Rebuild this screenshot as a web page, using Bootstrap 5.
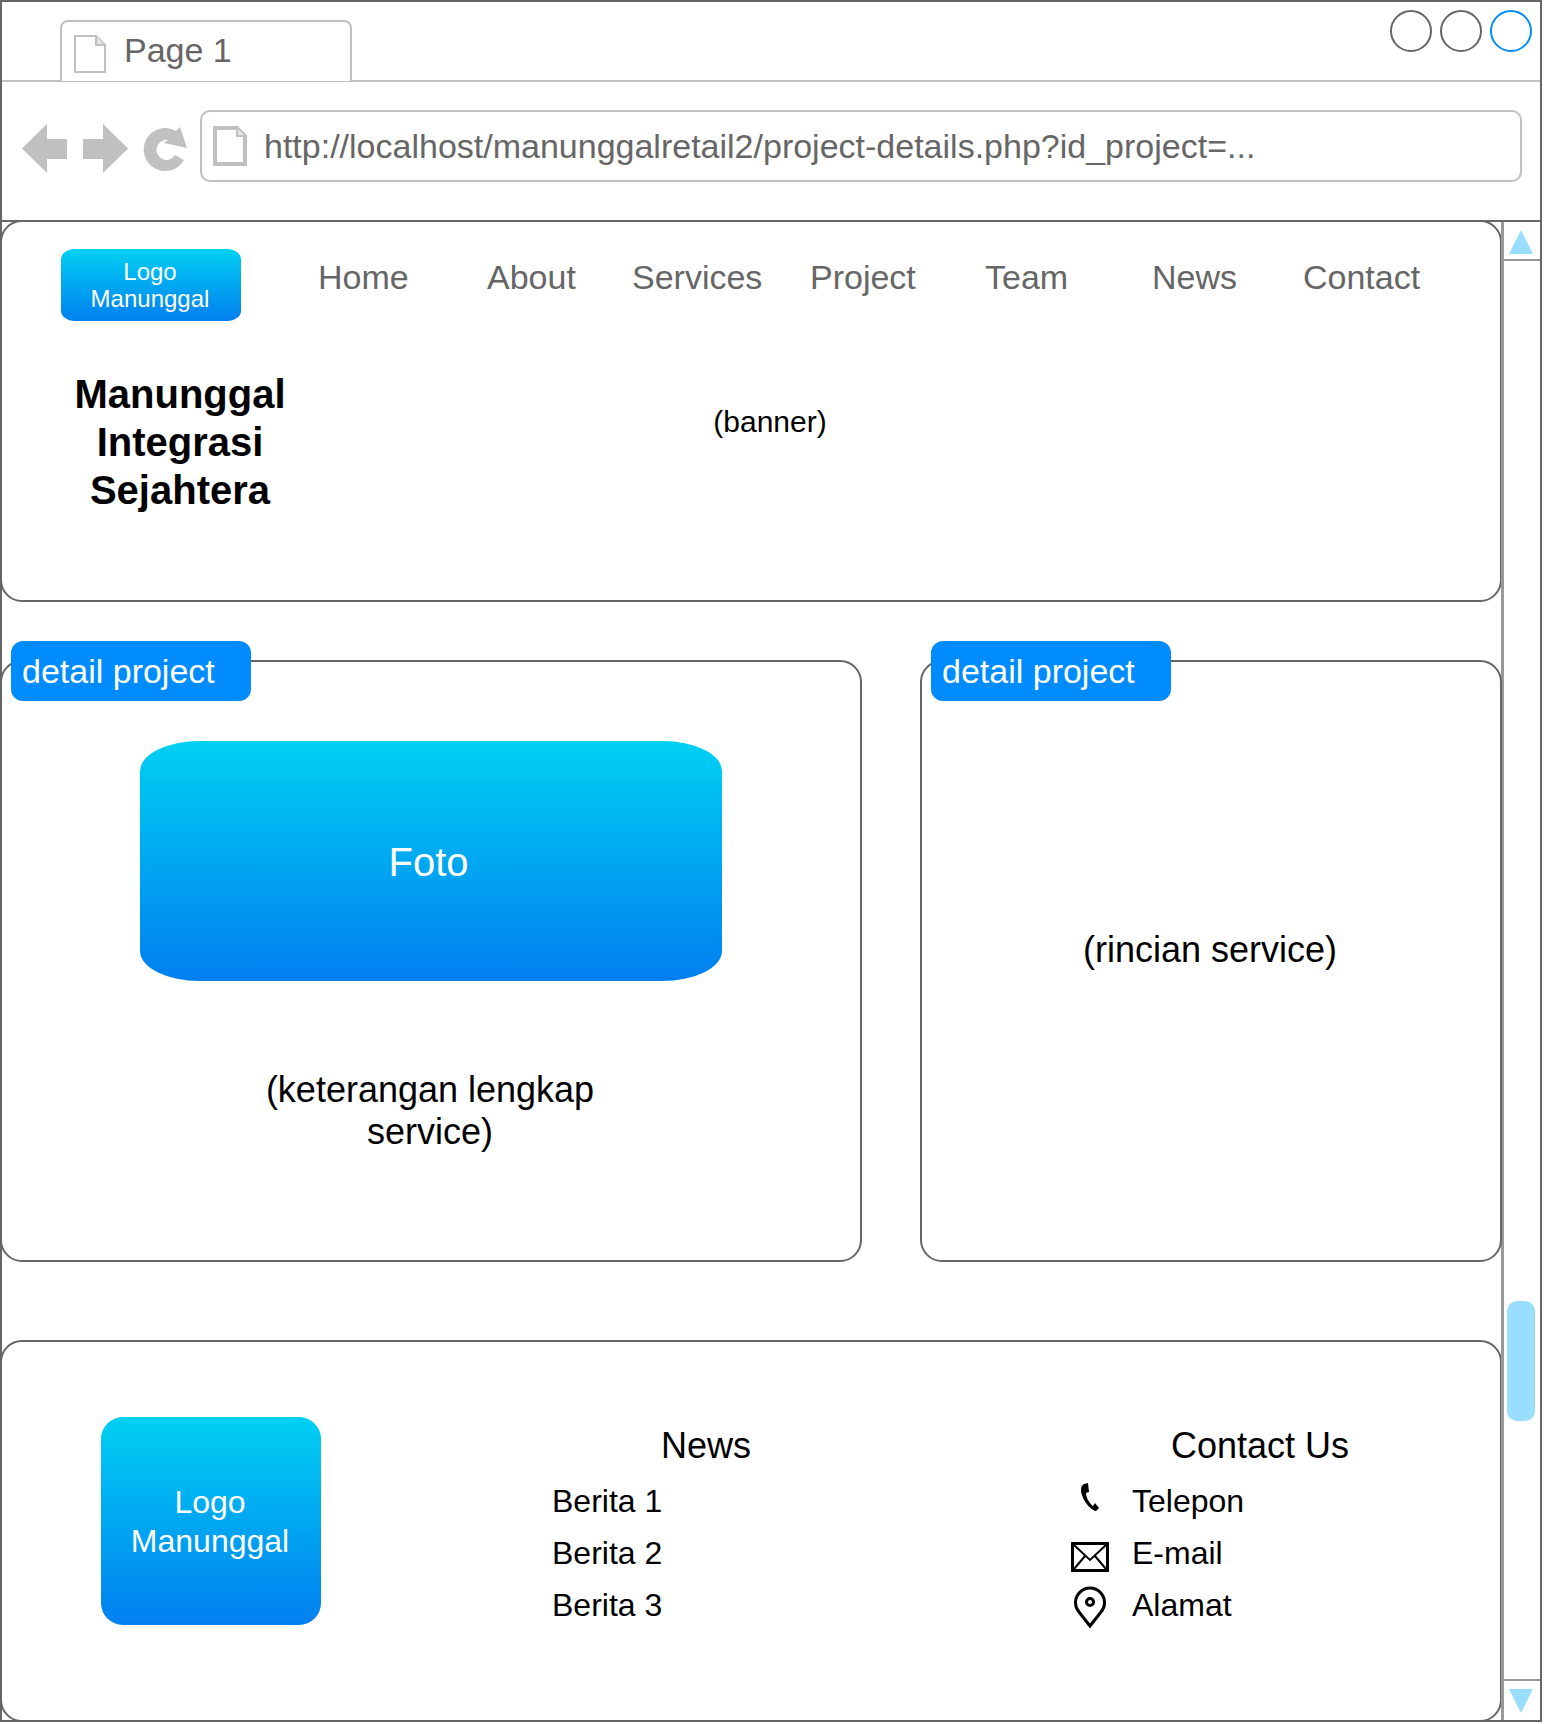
<!DOCTYPE html>
<html lang="en">

<head>
    <meta charset="UTF-8">
    <meta name="viewport" content="width=device-width, initial-scale=1.0">
    <title>Project details mockup</title>
    <link href="https://cdn.jsdelivr.net/npm/bootstrap@5.3.0/dist/css/bootstrap.min.css" rel="stylesheet">
    <style>
        body { margin: 0; background: #fff; font-family: "Liberation Sans", Arial, sans-serif; color: #000; }
        .win { width: 1542px; height: 1722px; border: 2px solid #666; }

        /* tab strip */
        .tabstrip { height: 80px; border-bottom: 2px solid #c0c0c0; padding-left: 58px; }
        .pagetab { width: 292px; height: 61px; margin-top: 18px; margin-bottom: -2px; background: #fff; border: 2px solid #c0c0c0; border-bottom: 0; border-radius: 8px 8px 0 0; color: #666; font-size: 34px; padding-left: 12px; gap: 18px; }
        .pagetab span { padding-bottom: 2px; }
        .winbtn { width: 42px; height: 42px; border: 2px solid #666; border-radius: 50%; }
        .winbtn-on { border-color: #008cff; }
        .winbtns { gap: 8px; padding: 8px 8px 0 0; margin-left: auto; }

        /* toolbar */
        .toolbar { height: 139px; padding: 28px 18px 0 20px; }
        .navicons { margin-top: 1px; }
        .urlbox { height: 72px; flex: 1; margin-left: 11px; border: 2px solid #c0c0c0; border-radius: 10px; color: #666; font-size: 34px; padding-left: 11px; gap: 17px; white-space: nowrap; }

        .viewport { height: 1500px; border-top: 2px solid #666; margin-top: -1px; }
        .pagecol { width: 1500px; }

        /* scrollbar */
        .sbar { width: 39px; border-left: 3px solid #999; margin-left: -1px; }
        .sbtn { height: 39px; padding-right: 2px; }
        .sbtn-up { border-bottom: 2px solid #999; padding-top: 2px; }
        .sbtn-down { border-top: 2px solid #999; height: 41px; }
        .sthumb { width: 28px; height: 120px; margin: 0 auto 258px 3px; background: #99ddff; border-radius: 10px; }

        /* panels */
        .panel { border: 2px solid #666; border-radius: 22px; background: #fff; margin-left: -2px; }
        .head-panel { height: 382px; margin-top: -2px; }
        .navrow { padding: 27px 0 0 59px; height: 104px; }
        .logo-sm { width: 180px; height: 72px; background: linear-gradient(#00d0f2, #007ff0); color: #fff; font-size: 24px; line-height: 27px; border-radius: 14px / 10px; padding-right: 2px; }
        .navlinks { margin-left: 77px; margin-top: -8px; display: grid; grid-template-columns: 169px 145px 178px 175px 167px 151px auto; }
        .navitem { height: 72px; color: #666; font-size: 34px; }
        .hero { padding-left: 28px; }
        .brandname { width: 300px; font-size: 40px; font-weight: 700; line-height: 48px; padding-top: 44px; }
        .bannertxt { width: 880px; font-size: 30px; padding-top: 73px; }

        .detail-wrap { gap: 60px; margin-top: 58px; }
        .detail-card { height: 602px; position: relative; font-size: 36px; line-height: 42px; }
        .detail-left { width: 862px; padding: 79px 0 0 138px; }
        .detail-right { width: 582px; padding: 0 2px 22px 0; }
        .tagbadge { position: absolute; left: 9px; top: -21px; width: 240px; height: 60px; background: #008cff; color: #fff; border-radius: 12px; font-size: 34px; padding-left: 11px; }
        .foto { width: 582px; height: 240px; background: linear-gradient(#00d0f2, #007ff0); color: #fff; font-size: 40px; border-radius: 60px / 30px; margin-bottom: 88px; padding: 1px 5px 0 0; }
        .ket { width: 580px; }

        .foot-panel { height: 382px; margin-top: 78px; padding: 75px 0 0 99px; }
        .logo-lg { width: 220px; height: 208px; background: linear-gradient(#00d0f2, #007ff0); color: #fff; font-size: 32px; line-height: 39px; border-radius: 22px; padding: 2px 2px 0 0; }
        .foot-news { width: 300px; margin-left: 231px; }
        .foot-contact { margin-left: 194px; width: 428px; }
        .foot-h { font-size: 36px; line-height: 42px; margin-top: 8px; margin-bottom: 8px; }
        .foot-h-news { padding-left: 8px; }
        .foot-row { height: 52px; font-size: 32px; }
        .foot-ico { width: 86px; padding-left: 2px; }
    </style>
</head>

<body>
    <div class="win d-flex flex-column">
        <!-- Tab strip -->
        <div class="tabstrip d-flex">
            <div class="pagetab d-flex align-items-center">
                <svg class="mt-1" width="32" height="38" viewBox="0 0 32 38" fill="none" stroke="#c0c0c0" stroke-width="2">
                    <path d="M1 1H22L31 10V37H1Z" />
                    <path d="M22 1V10H31" fill="#e4e4e4" />
                </svg>
                <span>Page 1</span>
            </div>
            <div class="winbtns d-flex">
                <div class="winbtn"></div>
                <div class="winbtn"></div>
                <div class="winbtn winbtn-on"></div>
            </div>
        </div>

        <!-- Toolbar -->
        <div class="toolbar d-flex">
            <svg class="navicons flex-shrink-0" width="167" height="71" viewBox="0 0 167 71" fill="#c0c0c0">
                <path d="M0 37.500L25 13V28H45V48H25V62Z" />
                <path d="M61 28H81V13L106 37.500L81 62V48H61Z" />
                <path d="M154 20A21.500 21.500 0 1 0 162 49L153 44A10 10 0 1 1 146 29L142 32L165 37L158 16Z" />
            </svg>
            <div class="urlbox d-flex align-items-center">
                <svg width="34" height="40" viewBox="0 0 34 40" fill="none" stroke="#c0c0c0" stroke-width="4">
                    <path d="M2 2H24L32 10V38H2Z" />
                    <path d="M24 2V10H32" stroke-width="2" fill="#e4e4e4" />
                </svg>
                <span>http://localhost/manunggalretail2/project-details.php?id_project=...</span>
            </div>
        </div>

        <!-- Viewport -->
        <div class="viewport d-flex">
            <div class="pagecol">
                <div class="panel head-panel">
                    <div class="navrow d-flex">
                        <div class="logo-sm d-flex align-items-center justify-content-center text-center">Logo<br>Manunggal</div>
                        <div class="navlinks">
                            <div class="navitem d-flex align-items-center">Home</div>
                            <div class="navitem d-flex align-items-center">About</div>
                            <div class="navitem d-flex align-items-center">Services</div>
                            <div class="navitem d-flex align-items-center">Project</div>
                            <div class="navitem d-flex align-items-center">Team</div>
                            <div class="navitem d-flex align-items-center">News</div>
                            <div class="navitem d-flex align-items-center">Contact</div>
                        </div>
                    </div>
                    <div class="hero d-flex">
                        <div class="brandname text-center">Manunggal<br>Integrasi<br>Sejahtera</div>
                        <div class="bannertxt text-center">(banner)</div>
                    </div>
                </div>

                <div class="detail-wrap d-flex">
                    <div class="panel detail-card detail-left">
                        <div class="tagbadge d-flex align-items-center">detail project</div>
                        <div class="foto d-flex align-items-center justify-content-center">Foto</div>
                        <div class="ket text-center">(keterangan lengkap<br>service)</div>
                    </div>
                    <div class="panel detail-card detail-right d-flex align-items-center justify-content-center">
                        <div class="tagbadge d-flex align-items-center">detail project</div>
                        <div>(rincian service)</div>
                    </div>
                </div>

                <div class="panel foot-panel d-flex">
                    <div class="logo-lg d-flex align-items-center justify-content-center text-center">Logo<br>Manunggal</div>
                    <div class="foot-news">
                        <div class="foot-h foot-h-news text-center">News</div>
                        <div class="foot-row d-flex align-items-center">Berita 1</div>
                        <div class="foot-row d-flex align-items-center">Berita 2</div>
                        <div class="foot-row d-flex align-items-center">Berita 3</div>
                    </div>
                    <div class="foot-contact">
                        <div class="foot-h text-center">Contact Us</div>
                        <div class="foot-row d-flex align-items-center">
                            <div class="foot-ico d-flex justify-content-center">
                                <svg class="mb-2" width="18" height="28" viewBox="0 0 18 28" fill="#000">
                                    <path d="M3 1L7 0L8 9L5 10C5 14 8 20 12 23L14 20L18 25L15 28C8 27 0 14 0 7C0 4 1 2 3 1Z" />
                                </svg>
                            </div>
                            <span>Telepon</span>
                        </div>
                        <div class="foot-row d-flex align-items-center">
                            <div class="foot-ico d-flex justify-content-center">
                                <svg class="mt-2" width="38" height="30" viewBox="0 0 38 30" fill="none" stroke="#000">
                                    <rect x="1.500" y="1.500" width="35" height="27" stroke-width="3" />
                                    <path d="M3 3L19 18L35 3M3 27L14 14M35 27L24 14" stroke-width="2" />
                                </svg>
                            </div>
                            <span>E-mail</span>
                        </div>
                        <div class="foot-row d-flex align-items-center">
                            <div class="foot-ico d-flex justify-content-center">
                                <svg class="mt-1" width="32" height="44" viewBox="0 0 32 44" fill="none" stroke="#000" stroke-width="3">
                                    <path d="M16 41L5 27A14.500 14.500 0 1 1 27 27Z" />
                                    <circle cx="16" cy="17" r="3.500" />
                                </svg>
                            </div>
                            <span>Alamat</span>
                        </div>
                    </div>
                </div>
            </div>

            <!-- Scrollbar -->
            <div class="sbar d-flex flex-column">
                <div class="sbtn sbtn-up d-flex align-items-center justify-content-center">
                    <svg width="24" height="24" viewBox="0 0 24 24" fill="#99ddff"><path d="M12 0L24 24H0Z" /></svg>
                </div>
                <div class="flex-grow-1"></div>
                <div class="sthumb"></div>
                <div class="sbtn sbtn-down d-flex align-items-center justify-content-center">
                    <svg width="24" height="24" viewBox="0 0 24 24" fill="#99ddff"><path d="M0 0H24L12 24Z" /></svg>
                </div>
            </div>
        </div>
    </div>

    <script src="https://cdn.jsdelivr.net/npm/bootstrap@5.3.0/dist/js/bootstrap.bundle.min.js"></script>
</body>

</html>
